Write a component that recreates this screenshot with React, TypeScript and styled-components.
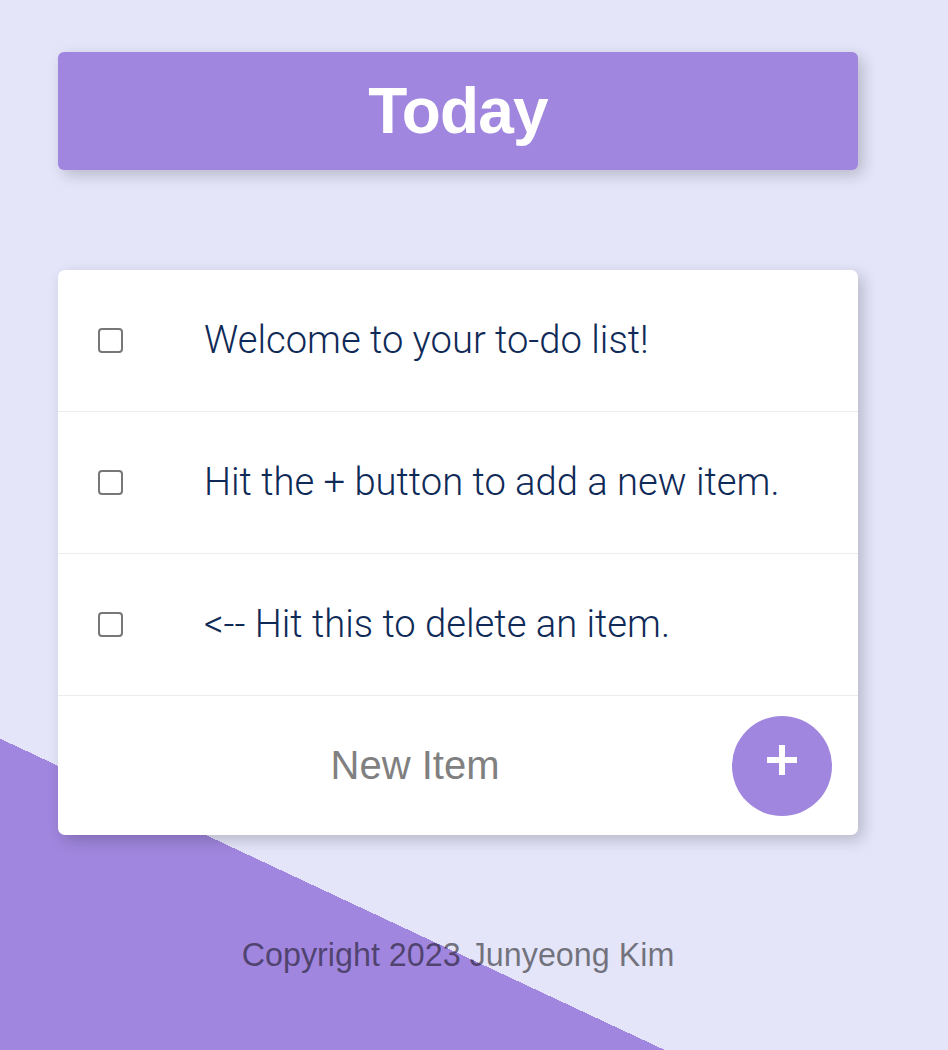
import React from "react";
import styled, { createGlobalStyle } from "styled-components";

const GlobalStyle = createGlobalStyle`
  html, body {
    margin: 0;
    padding: 0;
    height: 100%;
  }
  body {
    font-family: "Liberation Sans", Arial, sans-serif;
  }
`;

const Page = styled.div`
  min-height: 100vh;
  box-sizing: border-box;
  padding: 52px 0 0 58px;
  background: linear-gradient(25.1deg, #a086de 282px, #e4e5f9 282px);
  display: flex;
  flex-direction: column;
`;

const Column = styled.div`
  width: 800px;
  display: flex;
  flex-direction: column;
`;

const Header = styled.div`
  height: 118px;
  background: #a086de;
  border-radius: 6px;
  box-shadow: 5px 5px 15px rgba(0, 0, 0, 0.2);
  display: flex;
  align-items: center;
  justify-content: center;
`;

const Title = styled.h1`
  margin: 0;
  color: #fff;
  font-family: "Liberation Sans", Arial, sans-serif;
  font-weight: 700;
  font-size: 64px;
  letter-spacing: -0.8px;
  line-height: 1;
`;

const Card = styled.div`
  margin-top: 100px;
  background: #fff;
  border-radius: 7px;
  box-shadow: 5px 5px 15px rgba(0, 0, 0, 0.2);
  overflow: hidden;
`;

const Row = styled.div`
  height: 141px;
  display: flex;
  align-items: center;
  padding-left: 40px;
  border-bottom: 1px solid #ececec;
  box-sizing: content-box;
`;

const Check = styled.input.attrs({ type: "checkbox" })`
  appearance: none;
  margin: 0;
  width: 25px;
  height: 25px;
  border: 2px solid #777;
  border-radius: 4px;
  box-sizing: border-box;
  background: #fff;
  flex-shrink: 0;
`;

const ItemText = styled.p`
  margin: 0 0 0 81px;
  font-family: Roboto, "Liberation Sans", sans-serif;
  font-weight: 300;
  font-size: 38.2px;
  color: #0f2a57;
  line-height: 1;
`;

const FormRow = styled.form`
  height: 139px;
  display: flex;
  align-items: center;
  padding: 0 26px 0 40px;
`;

const NewInput = styled.input`
  flex: 1;
  min-width: 0;
  border: none;
  outline: none;
  background: transparent;
  text-align: center;
  font-family: "Liberation Sans", Arial, sans-serif;
  font-size: 40px;
  color: #808080;
  padding: 0;
  &::placeholder {
    color: #808080;
    opacity: 1;
  }
`;

const AddButton = styled.button`
  width: 100px;
  height: 100px;
  border-radius: 50%;
  border: none;
  background: #a086de;
  display: flex;
  align-items: center;
  justify-content: center;
  padding: 0 0 12px 0;
  flex-shrink: 0;
  cursor: pointer;
`;

const Footer = styled.footer`
  margin-top: 100px;
  text-align: center;
  font-family: "Liberation Sans", Arial, sans-serif;
  font-size: 32.3px;
  color: rgba(0, 0, 0, 0.5);
  line-height: 40px;
`;

const items = [
  "Welcome to your to-do list!",
  "Hit the + button to add a new item.",
  "<-- Hit this to delete an item.",
];

export default function App() {
  return (
    <>
      <GlobalStyle />
      <Page>
        <Column>
          <Header>
            <Title>Today</Title>
          </Header>
          <Card>
            {items.map((t) => (
              <Row key={t}>
                <Check />
                <ItemText>{t}</ItemText>
              </Row>
            ))}
            <FormRow onSubmit={(e) => e.preventDefault()}>
              <NewInput placeholder="New Item" />
              <AddButton type="submit" aria-label="add">
                <svg width="30" height="30" viewBox="0 0 30 30">
                  <rect x="12" y="0" width="6" height="30" fill="#fff" />
                  <rect x="0" y="12" width="30" height="6" fill="#fff" />
                </svg>
              </AddButton>
            </FormRow>
          </Card>
          <Footer>Copyright 2023 Junyeong Kim</Footer>
        </Column>
      </Page>
    </>
  );
}
